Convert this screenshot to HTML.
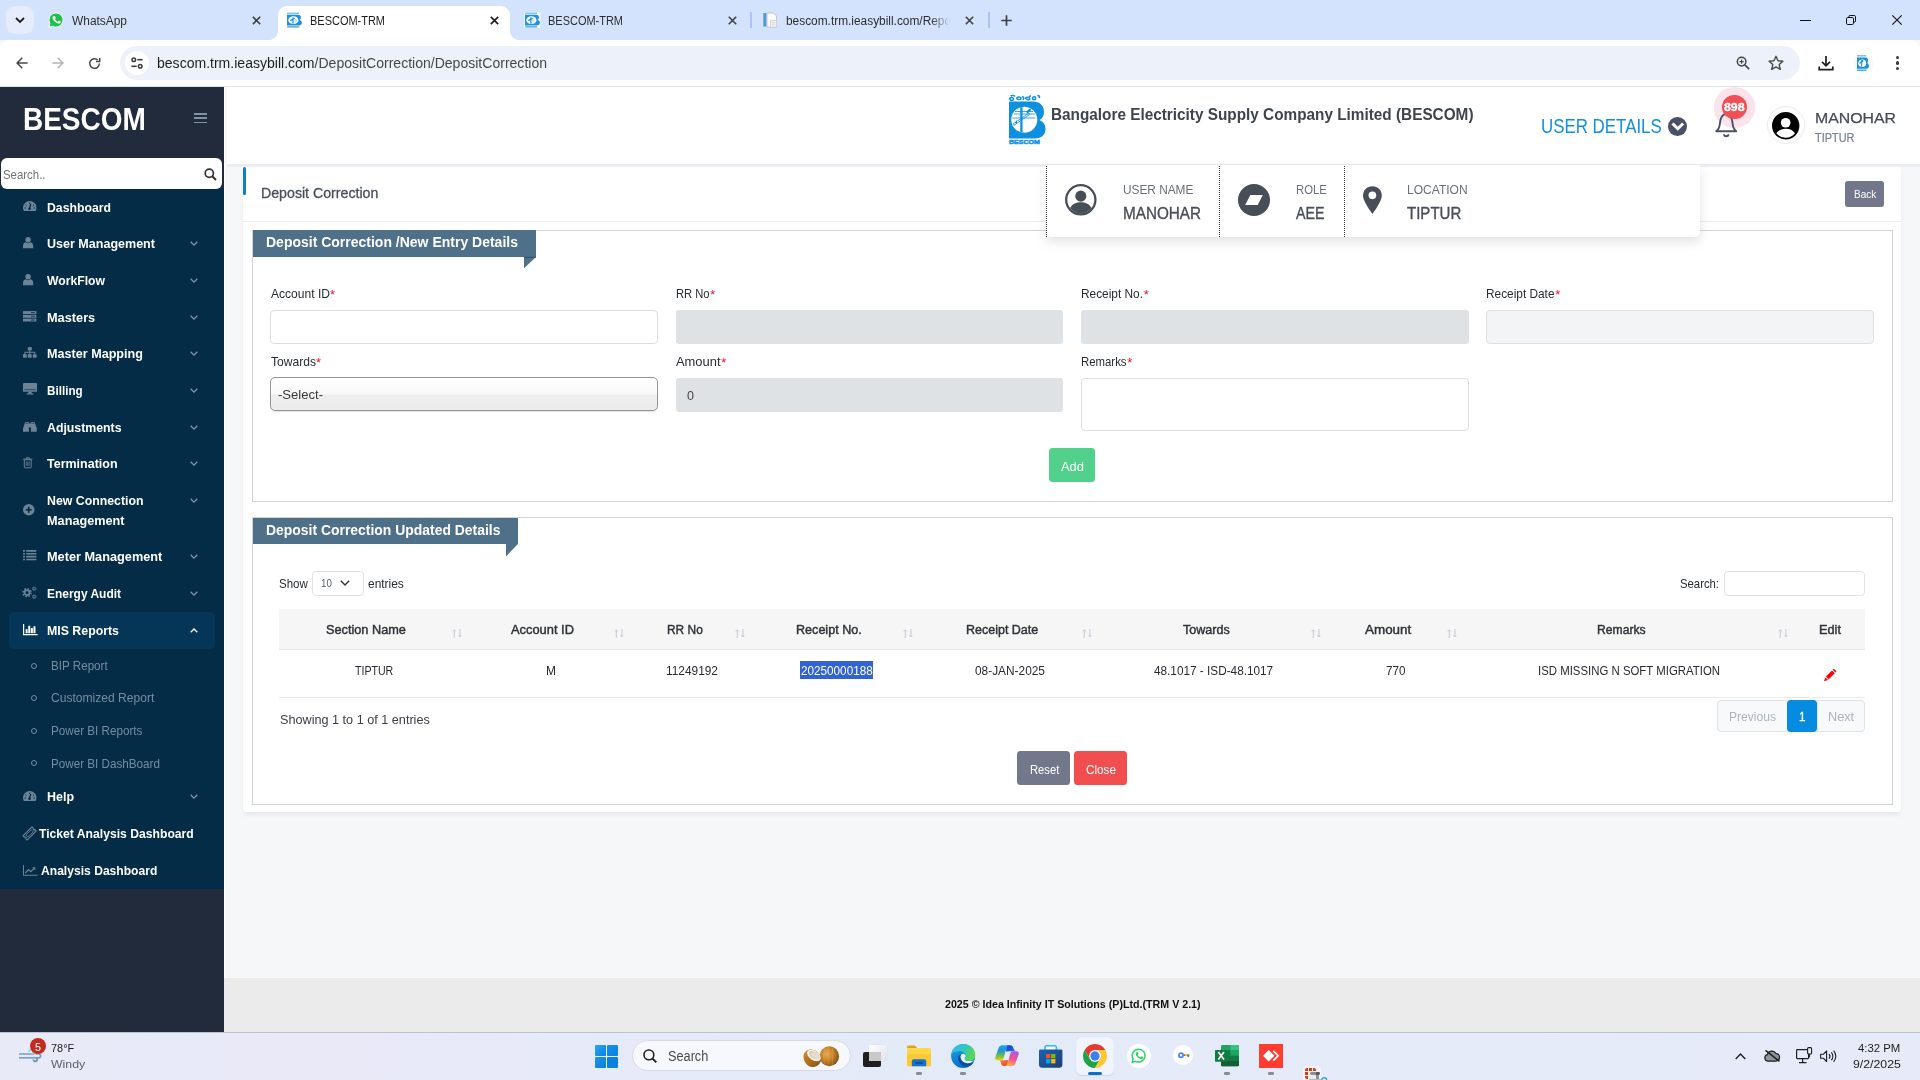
<!DOCTYPE html>
<html>
<head>
<meta charset="utf-8">
<title>BESCOM-TRM</title>
<style>
*{box-sizing:border-box;margin:0;padding:0}
html,body{width:1920px;height:1080px;overflow:hidden;background:#f6f7f9;font-family:"Liberation Sans",sans-serif;}
body{position:relative}
.abs{position:absolute}
.t{position:absolute;white-space:nowrap;transform-origin:0 50%;display:block}
svg{position:absolute;overflow:visible}
</style>
</head>
<body>
<!-- page -->
<div class="abs" style="left:0px;top:87px;width:224px;height:945px;background:#222b3c;"></div>
<div class="abs" style="left:0px;top:188px;width:224px;height:701px;background:#042c46;"></div>
<span class="t" style="left:22.60px;top:101px;height:36px;line-height:36px;font-size:31.5px;color:#fff;font-weight:bold;transform:scaleX(0.8882);">BESCOM</span>
<div class="abs" style="left:194px;top:113px;width:13px;height:1.8px;background:#7d93a6;"></div>
<div class="abs" style="left:194px;top:117.3px;width:13px;height:1.8px;background:#7d93a6;"></div>
<div class="abs" style="left:194px;top:121.6px;width:13px;height:1.8px;background:#7d93a6;"></div>
<div class="abs" style="left:0.8px;top:157.8px;width:221.4px;height:30.9px;background:#fff;border-radius:6px;"></div>
<span class="t" style="left:3.20px;top:167px;height:15px;line-height:15px;font-size:13.3px;color:#737373;transform:scaleX(0.8580);">Search..</span>
<svg style="left:203.5px;top:167.5px;" width="13" height="13" viewBox="0 0 13 13"><circle cx="5.300" cy="5.300" r="4.100" fill="none" stroke="#333" stroke-width="1.700"/><path d="M8.300 8.300L12 12" stroke="#333" stroke-width="2"/></svg>
<div class="abs" style="left:9px;top:612px;width:206px;height:37px;background:#053657;border-radius:4px;"></div>
<span class="t" style="left:46.50px;top:200px;height:15px;line-height:15px;font-size:13.1px;color:#fff;font-weight:bold;transform:scaleX(0.9353);">Dashboard</span>
<span class="t" style="left:46.50px;top:236px;height:15px;line-height:15px;font-size:13.1px;color:#fff;font-weight:bold;transform:scaleX(0.9571);">User Management</span>
<span class="t" style="left:46.50px;top:273px;height:15px;line-height:15px;font-size:13.1px;color:#fff;font-weight:bold;transform:scaleX(0.9303);">WorkFlow</span>
<span class="t" style="left:46.50px;top:310px;height:15px;line-height:15px;font-size:13.1px;color:#fff;font-weight:bold;transform:scaleX(0.9734);">Masters</span>
<span class="t" style="left:46.50px;top:346px;height:15px;line-height:15px;font-size:13.1px;color:#fff;font-weight:bold;transform:scaleX(0.9627);">Master Mapping</span>
<span class="t" style="left:46.50px;top:383px;height:15px;line-height:15px;font-size:13.1px;color:#fff;font-weight:bold;transform:scaleX(0.8920);">Billing</span>
<span class="t" style="left:46.50px;top:420px;height:15px;line-height:15px;font-size:13.1px;color:#fff;font-weight:bold;transform:scaleX(0.9403);">Adjustments</span>
<span class="t" style="left:46.50px;top:456px;height:15px;line-height:15px;font-size:13.1px;color:#fff;font-weight:bold;transform:scaleX(0.9541);">Termination</span>
<span class="t" style="left:46.50px;top:493px;height:15px;line-height:15px;font-size:13.1px;color:#fff;font-weight:bold;transform:scaleX(0.9413);">New Connection</span>
<span class="t" style="left:46.50px;top:513px;height:15px;line-height:15px;font-size:13.1px;color:#fff;font-weight:bold;transform:scaleX(0.9691);">Management</span>
<span class="t" style="left:46.50px;top:549px;height:15px;line-height:15px;font-size:13.1px;color:#fff;font-weight:bold;transform:scaleX(0.9725);">Meter Management</span>
<span class="t" style="left:46.50px;top:586px;height:15px;line-height:15px;font-size:13.1px;color:#fff;font-weight:bold;transform:scaleX(0.9144);">Energy Audit</span>
<span class="t" style="left:46.50px;top:623px;height:15px;line-height:15px;font-size:13.1px;color:#fff;font-weight:bold;transform:scaleX(0.9421);">MIS Reports</span>
<span class="t" style="left:46.50px;top:789px;height:15px;line-height:15px;font-size:13.1px;color:#fff;font-weight:bold;transform:scaleX(0.9511);">Help</span>
<span class="t" style="left:39.40px;top:826px;height:15px;line-height:15px;font-size:13.1px;color:#fff;font-weight:bold;transform:scaleX(0.9285);">Ticket Analysis Dashboard</span>
<span class="t" style="left:40.80px;top:863px;height:15px;line-height:15px;font-size:13.1px;color:#fff;font-weight:bold;transform:scaleX(0.9242);">Analysis Dashboard</span>
<span class="t" style="left:51.10px;top:658px;height:15px;line-height:15px;font-size:13px;color:#758da2;transform:scaleX(0.8950);">BIP Report</span>
<div class="abs" style="left:30.500px;top:662.7px;width:6px;height:6px;border:1.300px solid #758da2;border-radius:50%"></div>
<span class="t" style="left:51.10px;top:690px;height:15px;line-height:15px;font-size:13px;color:#758da2;transform:scaleX(0.9284);">Customized Report</span>
<div class="abs" style="left:30.500px;top:695.3px;width:6px;height:6px;border:1.300px solid #758da2;border-radius:50%"></div>
<span class="t" style="left:51.10px;top:723px;height:15px;line-height:15px;font-size:13px;color:#758da2;transform:scaleX(0.8972);">Power BI Reports</span>
<div class="abs" style="left:30.500px;top:727.7px;width:6px;height:6px;border:1.300px solid #758da2;border-radius:50%"></div>
<span class="t" style="left:51.10px;top:756px;height:15px;line-height:15px;font-size:13px;color:#758da2;transform:scaleX(0.8971);">Power BI DashBoard</span>
<div class="abs" style="left:30.500px;top:760.4px;width:6px;height:6px;border:1.300px solid #758da2;border-radius:50%"></div>
<svg style="left:190.2px;top:241px;" width="8" height="5" viewBox="0 0 8 5"><path d="M.7 .8L4 4.100L7.300 .8" fill="none" stroke="#8096aa" stroke-width="1.300"/></svg>
<svg style="left:190.2px;top:277.8px;" width="8" height="5" viewBox="0 0 8 5"><path d="M.7 .8L4 4.100L7.300 .8" fill="none" stroke="#8096aa" stroke-width="1.300"/></svg>
<svg style="left:190.2px;top:314.5px;" width="8" height="5" viewBox="0 0 8 5"><path d="M.7 .8L4 4.100L7.300 .8" fill="none" stroke="#8096aa" stroke-width="1.300"/></svg>
<svg style="left:190.2px;top:351.2px;" width="8" height="5" viewBox="0 0 8 5"><path d="M.7 .8L4 4.100L7.300 .8" fill="none" stroke="#8096aa" stroke-width="1.300"/></svg>
<svg style="left:190.2px;top:387.9px;" width="8" height="5" viewBox="0 0 8 5"><path d="M.7 .8L4 4.100L7.300 .8" fill="none" stroke="#8096aa" stroke-width="1.300"/></svg>
<svg style="left:190.2px;top:424.6px;" width="8" height="5" viewBox="0 0 8 5"><path d="M.7 .8L4 4.100L7.300 .8" fill="none" stroke="#8096aa" stroke-width="1.300"/></svg>
<svg style="left:190.2px;top:461.2px;" width="8" height="5" viewBox="0 0 8 5"><path d="M.7 .8L4 4.100L7.300 .8" fill="none" stroke="#8096aa" stroke-width="1.300"/></svg>
<svg style="left:190.2px;top:498px;" width="8" height="5" viewBox="0 0 8 5"><path d="M.7 .8L4 4.100L7.300 .8" fill="none" stroke="#8096aa" stroke-width="1.300"/></svg>
<svg style="left:190.2px;top:554px;" width="8" height="5" viewBox="0 0 8 5"><path d="M.7 .8L4 4.100L7.300 .8" fill="none" stroke="#8096aa" stroke-width="1.300"/></svg>
<svg style="left:190.2px;top:591px;" width="8" height="5" viewBox="0 0 8 5"><path d="M.7 .8L4 4.100L7.300 .8" fill="none" stroke="#8096aa" stroke-width="1.300"/></svg>
<svg style="left:190.2px;top:794px;" width="8" height="5" viewBox="0 0 8 5"><path d="M.7 .8L4 4.100L7.300 .8" fill="none" stroke="#8096aa" stroke-width="1.300"/></svg>
<svg style="left:190.2px;top:627.8px;" width="8" height="5" viewBox="0 0 8 5"><path d="M.7 4.300L4 1L7.300 4.300" fill="none" stroke="#fff" stroke-width="1.300"/></svg>
<svg style="left:22.8px;top:201px;" width="13.5" height="10" viewBox="0 0 27 20"><path d="M13.500 0A13.500 13.500 0 0 0 1.800 20h23.400A13.500 13.500 0 0 0 13.500 0z" fill="#6d8398"/><path d="M13.500 3v3M5 7.500l2.200 2M22 7.500l-2.200 2M3 14h3M24 14h-3" stroke="#042c46" stroke-width="2"/><path d="M15.500 6L13 15" stroke="#042c46" stroke-width="2.600"/><circle cx="13" cy="15.500" r="2.600" fill="#042c46"/></svg>
<svg style="left:22.8px;top:236.9px;" width="10.2" height="11.2" viewBox="0 0 20 22"><circle cx="10" cy="5.500" r="5.300" fill="#6d8398"/><path d="M0 22v-5c0-4 3-6.500 6-6.500 1.200 1.200 2.500 1.700 4 1.700s2.800-.500 4-1.700c3 0 6 2.500 6 6.500v5z" fill="#6d8398"/></svg>
<svg style="left:22.8px;top:273.6px;" width="10.2" height="11.2" viewBox="0 0 20 22"><circle cx="10" cy="5.500" r="5.300" fill="#6d8398"/><path d="M0 22v-5c0-4 3-6.500 6-6.500 1.200 1.200 2.500 1.700 4 1.700s2.800-.500 4-1.700c3 0 6 2.500 6 6.500v5z" fill="#6d8398"/></svg>
<svg style="left:22.8px;top:791px;" width="13.5" height="10" viewBox="0 0 27 20"><path d="M13.500 0A13.500 13.500 0 0 0 1.800 20h23.400A13.500 13.500 0 0 0 13.500 0z" fill="#6d8398"/><path d="M13.500 3v3M5 7.500l2.200 2M22 7.500l-2.200 2M3 14h3M24 14h-3" stroke="#042c46" stroke-width="2"/><path d="M15.500 6L13 15" stroke="#042c46" stroke-width="2.600"/><circle cx="13" cy="15.500" r="2.600" fill="#042c46"/></svg>
<svg style="left:22.8px;top:310.8px;" width="13.4" height="10.6" viewBox="0 0 27 21"><rect x="0" y="0" width="27" height="5.800" fill="#6d8398"/><rect x="0" y="7.600" width="27" height="5.800" fill="#6d8398"/><rect x="0" y="15.200" width="27" height="5.800" fill="#6d8398"/><path d="M16 2.900h8M16 10.500h8M16 18.100h8" stroke="#042c46" stroke-width="1.600"/></svg>
<svg style="left:22.8px;top:346.8px;" width="13.6" height="10.8" viewBox="0 0 27 21"><rect x="9.500" y="0" width="8" height="6.500" fill="#6d8398"/><rect x="0" y="14" width="7.500" height="7" fill="#6d8398"/><rect x="9.700" y="14" width="7.500" height="7" fill="#6d8398"/><rect x="19.500" y="14" width="7.500" height="7" fill="#6d8398"/><path d="M13.500 6v8M3.700 14v-3.700h19.600V14" fill="none" stroke="#6d8398" stroke-width="2"/></svg>
<svg style="left:22.8px;top:383px;" width="14" height="11.6" viewBox="0 0 28 23"><rect x="0" y="0" width="28" height="17.500" rx="1.800" fill="#6d8398"/><rect x="2.600" y="2.600" width="22.800" height="9.600" fill="#6d8398"/><path d="M2.600 13.300h22.800" stroke="#042c46" stroke-width="1.300"/><path d="M11 17.500h6l1 3.200h-8z" fill="#6d8398"/><rect x="7.500" y="20.500" width="13" height="2.500" fill="#6d8398"/></svg>
<svg style="left:22.8px;top:421.8px;" width="13.8" height="9.8" viewBox="0 0 28 20"><path d="M4.500 0h7.500v20H0v-7z" fill="#6d8398"/><path d="M23.500 0H16v20h12v-7z" fill="#6d8398"/><rect x="11" y="3" width="6" height="8" fill="#6d8398"/><path d="M5 2.500h6M17 2.500h6" stroke="#042c46" stroke-width="1.300"/></svg>
<svg style="left:23.3px;top:457px;" width="9.5" height="11.3" viewBox="0 0 19 23"><path d="M2.500 5.500h14v15a1.500 1.500 0 0 1-1.500 1.500h-11a1.500 1.500 0 0 1-1.500-1.500z" fill="none" stroke="#6d8398" stroke-width="2"/><path d="M0 4.500h19M6.500 4V1.500h6V4" fill="none" stroke="#6d8398" stroke-width="2"/><path d="M6.500 9v9.500M9.500 9v9.500M12.500 9v9.500" stroke="#6d8398" stroke-width="1.500"/></svg>
<svg style="left:22.8px;top:503.8px;" width="11.5" height="11.5" viewBox="0 0 23 23"><circle cx="11.500" cy="11.500" r="11.500" fill="#6d8398"/><path d="M11.500 5.500v12M5.500 11.500h12" stroke="#042c46" stroke-width="3.400"/></svg>
<svg style="left:22.8px;top:549.7px;" width="13.4" height="10.4" viewBox="0 0 27 21"><path d="M0 1.700h4M0 7.500h4M0 13.300h4M0 19.100h4" stroke="#6d8398" stroke-width="3.300"/><path d="M6.500 1.700H27M6.500 7.500H27M6.500 13.300H27M6.500 19.100H27" stroke="#6d8398" stroke-width="3.300"/></svg>
<svg style="left:22.3px;top:585.8px;" width="15" height="13.4" viewBox="0 0 30 27"><circle cx="10" cy="13.500" r="8" fill="none" stroke="#6d8398" stroke-width="3.400" stroke-dasharray="3.140 3.140"/><circle cx="10" cy="13.500" r="5" fill="none" stroke="#6d8398" stroke-width="3.600"/><circle cx="24.500" cy="5.500" r="3.900" fill="none" stroke="#6d8398" stroke-width="1.800" stroke-dasharray="1.530 1.530"/><circle cx="24.500" cy="5.500" r="2.300" fill="none" stroke="#6d8398" stroke-width="1.900"/><circle cx="24.500" cy="21.500" r="3.900" fill="none" stroke="#6d8398" stroke-width="1.800" stroke-dasharray="1.530 1.530"/><circle cx="24.500" cy="21.500" r="2.300" fill="none" stroke="#6d8398" stroke-width="1.900"/></svg>
<svg style="left:22.8px;top:624.2px;" width="14.6" height="11.2" viewBox="0 0 29 22"><path d="M1.200 0V20.800H29" fill="none" stroke="#fff" stroke-width="2.400"/><path d="M7.200 18.500V10.500M12.400 18.500V3.500M17.600 18.500V8M22.800 18.500V4.500" stroke="#fff" stroke-width="4"/></svg>
<svg style="left:22.5px;top:826.8px;" width="13.2" height="12.8" viewBox="0 0 26 26"><g transform="rotate(-45 13 13)"><path d="M0 7h26v4a2 2 0 0 0 0 4v4H0v-4a2 2 0 0 0 0-4z" fill="none" stroke="#6d8398" stroke-width="2.200"/><rect x="5.500" y="10" width="15" height="6" fill="none" stroke="#6d8398" stroke-width="1.600"/></g></svg>
<svg style="left:22.8px;top:865.2px;" width="14.6" height="10.8" viewBox="0 0 29 21"><path d="M1 0V20H29" fill="none" stroke="#6d8398" stroke-width="2"/><path d="M4.500 15.500L11 9l4.500 4L23 5.500" fill="none" stroke="#6d8398" stroke-width="2.600"/><path d="M18.500 4h6v6z" fill="#6d8398"/></svg>
<div class="abs" style="left:224px;top:87px;width:1.3px;height:945px;background:#fff;"></div>
<div class="abs" style="left:227px;top:163.7px;width:1693px;height:3.4px;background:linear-gradient(#e8eaf0,#eef0f5);"></div>
<div class="abs" style="left:227px;top:87px;width:1693px;height:76.8px;background:#fff;"></div>
<svg style="left:1009px;top:94.5px;" width="36.5" height="49.5" viewBox="0 0 73 99"><path d="M0 13H48c13 0 22 8 22 21 0 8-4 13-9 16 7 3 12 9 12 18 0 13-10 19-22 19H0z" fill="#0d90e0"/><circle cx="30.500" cy="49.500" r="26" fill="#fff"/><path d="M22.500 24.500h4.600v50h-4.600z" fill="#0d90e0"/><path d="M8 58l32-22 1.800 2.600-32 22zM10 38h42M7 46h46M12 33h36" stroke="#0d90e0" stroke-width="1.600" fill="none"/><path d="M34 33l8-6 3 3-8 7zM16 50l-5 6 5 1z" fill="#0d90e0"/><g fill="none" stroke="#0d90e0" stroke-width="2.900" transform="scale(1.090 1)"><path d="M1 9c0-5 7-5 7-1s-6 4-6 0M3 2c3-2 7-1 8 1"/><path d="M14 8c0-5 8-5 8-1 0 3-7 3-7 0M24 3c3 0 4 5 1 6"/><path d="M30 8c0-5 8-5 8 0 0 2-6 2-6-1M40 1l-3 3"/><circle cx="46" cy="6.500" r="3"/><path d="M52 1c4 0 5 3 3 5"/></g><text x="0" y="98.600" font-family="Liberation Sans" font-weight="bold" font-size="12.500" textLength="62" lengthAdjust="spacingAndGlyphs" fill="#0d90e0" stroke="#0d90e0" stroke-width=".9">BESCOM</text></svg>
<span class="t" style="left:1051.30px;top:106px;height:17px;line-height:17px;font-size:16px;color:#3e444e;font-weight:bold;transform:scaleX(0.9581);">Bangalore Electricity Supply Company Limited (BESCOM)</span>
<span class="t" style="left:1541.20px;top:115px;height:22px;line-height:22px;font-size:19.6px;color:#1290e0;transform:scaleX(0.8620);">USER DETAILS</span>
<div class="abs" style="left:1668px;top:116.8px;width:18.8px;height:18.8px;background:#4a5068;border-radius:50%;"></div>
<svg style="left:1670.6px;top:122.3px;" width="13.6" height="8.6" viewBox="0 0 13.600 8.600"><path d="M1.500 1.500L6.800 6.700L12.100 1.500" fill="none" stroke="#fff" stroke-width="3"/></svg>
<div class="abs" style="left:1713.7px;top:87.2px;width:41.7px;height:40.5px;background:#fbe3ec;border-radius:50%;"></div>
<svg style="left:1715px;top:112.2px;" width="22.5" height="25.4" viewBox="0 0 22.500 25.400"><path d="M1.200 19.200c2.200-1.400 3.300-3.400 3.700-7.500.5-5.700 2.300-9.700 6.350-9.700s5.850 4 6.350 9.700c.4 4.100 1.500 6.100 3.700 7.500z" fill="none" stroke="#4a5068" stroke-width="1.900" stroke-linejoin="round"/><path d="M8.700 22.300c.5 1.300 1.400 1.900 2.550 1.900s2.050-.6 2.550-1.900" fill="none" stroke="#4a5068" stroke-width="1.900"/></svg>
<div class="abs" style="left:1722px;top:94.6px;width:24.6px;height:24.6px;background:#f04f56;border-radius:50%;"></div>
<span class="t" style="left:1724.10px;top:100px;height:14px;line-height:14px;font-size:11.8px;color:#fff;font-weight:bold;transform:scaleX(1.0463);-webkit-text-stroke:0.35px #fff;">898</span>
<div class="abs" style="left:1766.5px;top:106px;width:38px;height:38px;background:#fff;border-radius:50%;border:1px solid #ececec;"></div>
<svg style="left:1772px;top:111.7px;" width="27.4" height="27.4" viewBox="0 0 28 28"><circle cx="14" cy="14" r="14" fill="#000"/><circle cx="14" cy="11" r="4.900" fill="#fff"/><path d="M4.500 21.800c2-3.400 5.500-4.800 9.500-4.800s7.500 1.400 9.500 4.800A12.300 12.300 0 0 1 14 26.300a12.300 12.300 0 0 1-9.500-4.500z" fill="#fff"/></svg>
<span class="t" style="left:1815.00px;top:109px;height:17px;line-height:17px;font-size:15.5px;color:#464b56;transform:scaleX(1.0224);-webkit-text-stroke:0.25px #464b56;">MANOHAR</span>
<span class="t" style="left:1815.00px;top:131px;height:14px;line-height:14px;font-size:12px;color:#7a8097;transform:scaleX(0.9093);-webkit-text-stroke:0.2px #7a8097;">TIPTUR</span>
<div class="abs" style="left:243px;top:167px;width:1658.3px;height:644.8px;background:#fff;box-shadow:0 3px 4px -1px rgba(185,190,202,.36);border-radius:4px;"></div>
<div class="abs" style="left:242.8px;top:166.7px;width:3.2px;height:28px;background:#0f7fc4;border-radius:1.600px;"></div>
<span class="t" style="left:260.80px;top:185px;height:16px;line-height:16px;font-size:14.8px;color:#494e59;transform:scaleX(0.9579);-webkit-text-stroke:0.3px #494e59;">Deposit Correction</span>
<div class="abs" style="left:243px;top:221px;width:1658.3px;height:1px;background:#ebebee;"></div>
<div class="abs" style="left:1845.2px;top:181px;width:38.7px;height:25.8px;background:#73778c;border-radius:3px;"></div>
<span class="t" style="left:1853.90px;top:188px;height:12px;line-height:12px;font-size:11px;color:#fff;transform:scaleX(0.9078);">Back</span>
<div class="abs" style="left:252px;top:229.500px;width:1641px;height:272px;border:1px solid #d4d4d6;background:#fff"></div>
<div class="abs" style="left:252.5px;top:230px;width:283.4px;height:26.7px;background:#4f7089;"></div>
<svg style="left:524px;top:256.5px;" width="12" height="11.2" viewBox="0 0 12 11.200"><path d="M0 0H12L0 11.200z" fill="#4f7089"/><path d="M0 .3H12" stroke="#264f6e" stroke-width=".9"/></svg>
<span class="t" style="left:266.30px;top:233px;height:17px;line-height:17px;font-size:15.3px;color:#fff;font-weight:bold;transform:scaleX(0.9148);">Deposit Correction /New Entry Details</span>
<span class="t" style="left:270.50px;top:286px;height:15px;line-height:15px;font-size:13px;color:#282c31;transform:scaleX(0.9279);">Account ID</span>
<span class="t" style="left:330.00px;top:287px;height:15px;line-height:15px;font-size:13px;color:#f0142f;">*</span>
<span class="t" style="left:676.30px;top:286px;height:15px;line-height:15px;font-size:13px;color:#282c31;transform:scaleX(0.8588);">RR No</span>
<span class="t" style="left:710.30px;top:287px;height:15px;line-height:15px;font-size:13px;color:#f0142f;">*</span>
<span class="t" style="left:1081.30px;top:286px;height:15px;line-height:15px;font-size:13px;color:#282c31;transform:scaleX(0.9128);">Receipt No.</span>
<span class="t" style="left:1143.80px;top:287px;height:15px;line-height:15px;font-size:13px;color:#f0142f;">*</span>
<span class="t" style="left:1486.30px;top:286px;height:15px;line-height:15px;font-size:13px;color:#282c31;transform:scaleX(0.9115);">Receipt Date</span>
<span class="t" style="left:1555.30px;top:287px;height:15px;line-height:15px;font-size:13px;color:#f0142f;">*</span>
<span class="t" style="left:270.50px;top:354px;height:15px;line-height:15px;font-size:13px;color:#282c31;transform:scaleX(0.9296);">Towards</span>
<span class="t" style="left:316.00px;top:355px;height:15px;line-height:15px;font-size:13px;color:#f0142f;">*</span>
<span class="t" style="left:676.30px;top:354px;height:15px;line-height:15px;font-size:13px;color:#282c31;transform:scaleX(0.9932);">Amount</span>
<span class="t" style="left:721.30px;top:355px;height:15px;line-height:15px;font-size:13px;color:#f0142f;">*</span>
<span class="t" style="left:1081.30px;top:354px;height:15px;line-height:15px;font-size:13px;color:#282c31;transform:scaleX(0.8749);">Remarks</span>
<span class="t" style="left:1127.30px;top:355px;height:15px;line-height:15px;font-size:13px;color:#f0142f;">*</span>
<div class="abs" style="left:270px;top:310px;width:388px;height:33.500px;border:1px solid #dcdee3;border-radius:4px;background:#fff"></div>
<div class="abs" style="left:676px;top:310px;width:387px;height:33.5px;background:#dfe2e5;border-radius:3px;"></div>
<div class="abs" style="left:1081px;top:310px;width:388px;height:33.5px;background:#dfe2e5;border-radius:3px;"></div>
<div class="abs" style="left:1486px;top:310px;width:388px;height:33.500px;border:1px solid #dfe1e5;border-radius:4px;background:#f3f4f6"></div>
<div class="abs" style="left:270px;top:377px;width:388px;height:34.200px;border:1px solid #949494;border-radius:5px;background:linear-gradient(#fff 0%,#f9f9f9 48%,#eeeeee 54%,#ececec 100%);box-shadow:0 1px 1px rgba(0,0,0,.10)"></div>
<span class="t" style="left:278.30px;top:387px;height:15px;line-height:15px;font-size:13.5px;color:#3a3a3a;transform:scaleX(0.9675);">-Select-</span>
<div class="abs" style="left:676px;top:377.5px;width:387px;height:34px;background:#dfe2e5;border-radius:3px;"></div>
<span class="t" style="left:686.50px;top:388px;height:15px;line-height:15px;font-size:13px;color:#444;transform:scaleX(0.9682);">0</span>
<div class="abs" style="left:1081px;top:377.500px;width:388px;height:53.500px;border:1px solid #dcdee3;border-radius:4px;background:#fff"></div>
<div class="abs" style="left:1049px;top:448px;width:46px;height:33.8px;background:#52d18c;border-radius:3.500px;"></div>
<span class="t" style="left:1060.90px;top:459px;height:15px;line-height:15px;font-size:13px;color:#fff;transform:scaleX(0.9943);">Add</span>
<div class="abs" style="left:252px;top:516.500px;width:1641px;height:288px;border:1px solid #d4d4d6;background:#fff"></div>
<div class="abs" style="left:252.5px;top:517.7px;width:265.4px;height:26px;background:#4f7089;"></div>
<svg style="left:506.1px;top:543.5px;" width="11.9" height="12.4" viewBox="0 0 11.900 12.400"><path d="M0 0H11.900L0 12.400z" fill="#4f7089"/></svg>
<span class="t" style="left:266.30px;top:521px;height:17px;line-height:17px;font-size:15.3px;color:#fff;font-weight:bold;transform:scaleX(0.9103);">Deposit Correction Updated Details</span>
<span class="t" style="left:279.00px;top:576px;height:15px;line-height:15px;font-size:13px;color:#282c31;transform:scaleX(0.8856);">Show</span>
<div class="abs" style="left:312.200px;top:571px;width:51.600px;height:24.800px;border:1px solid #e0e3e8;border-radius:4px;background:#fff"></div>
<span class="t" style="left:321.30px;top:577px;height:12px;line-height:12px;font-size:11.5px;color:#5a6068;transform:scaleX(0.8443);">10</span>
<svg style="left:340.3px;top:580.2px;" width="10" height="6" viewBox="0 0 10 6"><path d="M.8 .8L5 5L9.200 .8" fill="none" stroke="#333" stroke-width="1.400"/></svg>
<span class="t" style="left:367.50px;top:576px;height:15px;line-height:15px;font-size:13px;color:#282c31;transform:scaleX(0.9175);">entries</span>
<span class="t" style="left:1679.80px;top:576px;height:15px;line-height:15px;font-size:13px;color:#282c31;transform:scaleX(0.8705);">Search:</span>
<div class="abs" style="left:1724px;top:571px;width:141px;height:24.800px;border:1px solid #e0e3e8;border-radius:4px;background:#fff"></div>
<div class="abs" style="left:278.8px;top:609px;width:1586.2px;height:40.3px;background:#f6f6f6;"></div>
<div class="abs" style="left:278.8px;top:649.2px;width:1586.2px;height:1px;background:#e9eaed;"></div>
<span class="t" style="left:326.30px;top:622px;height:15px;line-height:15px;font-size:13.2px;color:#2f3338;transform:scaleX(0.9649);-webkit-text-stroke:0.45px #2f3338;">Section Name</span>
<span class="t" style="left:511.30px;top:622px;height:15px;line-height:15px;font-size:13.2px;color:#2f3338;transform:scaleX(0.9758);-webkit-text-stroke:0.45px #2f3338;">Account ID</span>
<span class="t" style="left:666.80px;top:622px;height:15px;line-height:15px;font-size:13.2px;color:#2f3338;transform:scaleX(0.9039);-webkit-text-stroke:0.45px #2f3338;">RR No</span>
<span class="t" style="left:796.30px;top:622px;height:15px;line-height:15px;font-size:13.2px;color:#2f3338;transform:scaleX(0.9541);-webkit-text-stroke:0.45px #2f3338;">Receipt No.</span>
<span class="t" style="left:965.80px;top:622px;height:15px;line-height:15px;font-size:13.2px;color:#2f3338;transform:scaleX(0.9475);-webkit-text-stroke:0.45px #2f3338;">Receipt Date</span>
<span class="t" style="left:1182.50px;top:622px;height:15px;line-height:15px;font-size:13.2px;color:#2f3338;transform:scaleX(0.9521);-webkit-text-stroke:0.45px #2f3338;">Towards</span>
<span class="t" style="left:1365.00px;top:622px;height:15px;line-height:15px;font-size:13.2px;color:#2f3338;transform:scaleX(1.0177);-webkit-text-stroke:0.45px #2f3338;">Amount</span>
<span class="t" style="left:1597.40px;top:622px;height:15px;line-height:15px;font-size:13.2px;color:#2f3338;transform:scaleX(0.9222);-webkit-text-stroke:0.45px #2f3338;">Remarks</span>
<span class="t" style="left:1819.40px;top:622px;height:15px;line-height:15px;font-size:13.2px;color:#2f3338;transform:scaleX(0.9672);-webkit-text-stroke:0.45px #2f3338;">Edit</span>
<svg style="left:451.8px;top:628.8px;" width="10.4" height="8.8" viewBox="0 0 10.400 8.800"><path d="M2.300 8.800V.8M.9 2.400L2.300 .8 3.700 2.400" fill="none" stroke="#c6cad6" stroke-width="1"/><path d="M7.900 0V8M6.500 6.400L7.900 8 9.300 6.400" fill="none" stroke="#c6cad6" stroke-width="1"/></svg>
<svg style="left:614.3px;top:628.8px;" width="10.4" height="8.8" viewBox="0 0 10.400 8.800"><path d="M2.300 8.800V.8M.9 2.400L2.300 .8 3.700 2.400" fill="none" stroke="#c6cad6" stroke-width="1"/><path d="M7.900 0V8M6.500 6.400L7.900 8 9.300 6.400" fill="none" stroke="#c6cad6" stroke-width="1"/></svg>
<svg style="left:735px;top:628.8px;" width="10.4" height="8.8" viewBox="0 0 10.400 8.800"><path d="M2.300 8.800V.8M.9 2.400L2.300 .8 3.700 2.400" fill="none" stroke="#c6cad6" stroke-width="1"/><path d="M7.900 0V8M6.500 6.400L7.900 8 9.300 6.400" fill="none" stroke="#c6cad6" stroke-width="1"/></svg>
<svg style="left:903px;top:628.8px;" width="10.4" height="8.8" viewBox="0 0 10.400 8.800"><path d="M2.300 8.800V.8M.9 2.400L2.300 .8 3.700 2.400" fill="none" stroke="#c6cad6" stroke-width="1"/><path d="M7.900 0V8M6.500 6.400L7.900 8 9.300 6.400" fill="none" stroke="#c6cad6" stroke-width="1"/></svg>
<svg style="left:1081.8px;top:628.8px;" width="10.4" height="8.8" viewBox="0 0 10.400 8.800"><path d="M2.300 8.800V.8M.9 2.400L2.300 .8 3.700 2.400" fill="none" stroke="#c6cad6" stroke-width="1"/><path d="M7.900 0V8M6.500 6.400L7.900 8 9.300 6.400" fill="none" stroke="#c6cad6" stroke-width="1"/></svg>
<svg style="left:1310.8px;top:628.8px;" width="10.4" height="8.8" viewBox="0 0 10.400 8.800"><path d="M2.300 8.800V.8M.9 2.400L2.300 .8 3.700 2.400" fill="none" stroke="#c6cad6" stroke-width="1"/><path d="M7.900 0V8M6.500 6.400L7.900 8 9.300 6.400" fill="none" stroke="#c6cad6" stroke-width="1"/></svg>
<svg style="left:1446.8px;top:628.8px;" width="10.4" height="8.8" viewBox="0 0 10.400 8.800"><path d="M2.300 8.800V.8M.9 2.400L2.300 .8 3.700 2.400" fill="none" stroke="#c6cad6" stroke-width="1"/><path d="M7.900 0V8M6.500 6.400L7.900 8 9.300 6.400" fill="none" stroke="#c6cad6" stroke-width="1"/></svg>
<svg style="left:1777.6px;top:628.8px;" width="10.4" height="8.8" viewBox="0 0 10.400 8.800"><path d="M2.300 8.800V.8M.9 2.400L2.300 .8 3.700 2.400" fill="none" stroke="#c6cad6" stroke-width="1"/><path d="M7.900 0V8M6.500 6.400L7.900 8 9.300 6.400" fill="none" stroke="#c6cad6" stroke-width="1"/></svg>
<div class="abs" style="left:800px;top:661px;width:73px;height:17.8px;background:#3163d6;"></div>
<span class="t" style="left:355.00px;top:664px;height:14px;line-height:14px;font-size:12.2px;color:#282c31;transform:scaleX(0.8694);">TIPTUR</span>
<span class="t" style="left:545.50px;top:664px;height:14px;line-height:14px;font-size:12.2px;color:#282c31;transform:scaleX(0.9839);">M</span>
<span class="t" style="left:666.30px;top:664px;height:14px;line-height:14px;font-size:12.2px;color:#282c31;transform:scaleX(0.9742);">11249192</span>
<span class="t" style="left:800.60px;top:664px;height:14px;line-height:14px;font-size:12.2px;color:#fff;transform:scaleX(0.9620);">20250000188</span>
<span class="t" style="left:974.50px;top:664px;height:14px;line-height:14px;font-size:12.2px;color:#282c31;transform:scaleX(0.9738);">08-JAN-2025</span>
<span class="t" style="left:1153.80px;top:664px;height:14px;line-height:14px;font-size:12.2px;color:#282c31;transform:scaleX(0.9664);">48.1017 - ISD-48.1017</span>
<span class="t" style="left:1386.30px;top:664px;height:14px;line-height:14px;font-size:12.2px;color:#282c31;transform:scaleX(0.9580);">770</span>
<span class="t" style="left:1538.30px;top:664px;height:14px;line-height:14px;font-size:12.2px;color:#282c31;transform:scaleX(0.9355);">ISD MISSING N SOFT MIGRATION</span>
<svg style="left:1824.3px;top:668.6px;" width="12.2" height="12.2" viewBox="0 0 12.200 12.200"><path d="M0 12.200L1.300 8.200L4 10.900z" fill="#f00"/><path d="M1.900 7.500L8 1.400L10.800 4.200L4.700 10.300z" fill="#f00"/><path d="M8.700 .8L9.400 .1a.6.6 0 0 1 .8 0L12.100 2a.6.6 0 0 1 0 .8L11.400 3.500z" fill="#f00"/></svg>
<div class="abs" style="left:278.8px;top:697px;width:1586.2px;height:1px;background:#e9eaed;"></div>
<span class="t" style="left:279.50px;top:712px;height:15px;line-height:15px;font-size:13.5px;color:#3b4047;transform:scaleX(0.9371);">Showing 1 to 1 of 1 entries</span>
<div class="abs" style="left:1717px;top:700px;width:148px;height:32px;border:1px solid #dfe2e6;border-radius:4px;background:#f8f9fa"></div>
<div class="abs" style="left:1816.8px;top:700.5px;width:1px;height:31px;background:#dfe2e6;"></div>
<div class="abs" style="left:1787px;top:699.8px;width:30.2px;height:32.4px;background:#058bdf;border-radius:4px;"></div>
<span class="t" style="left:1729.30px;top:709px;height:15px;line-height:15px;font-size:13px;color:#adb3bd;transform:scaleX(0.9292);">Previous</span>
<span class="t" style="left:1798.80px;top:709px;height:15px;line-height:15px;font-size:13px;color:#fff;transform:scaleX(0.8990);-webkit-text-stroke:0.3px #fff;">1</span>
<span class="t" style="left:1827.70px;top:709px;height:15px;line-height:15px;font-size:13px;color:#adb3bd;transform:scaleX(0.9727);">Next</span>
<div class="abs" style="left:1017px;top:751px;width:53px;height:34px;background:#73778c;border-radius:3.500px;"></div>
<span class="t" style="left:1029.50px;top:762px;height:15px;line-height:15px;font-size:13px;color:#fff;transform:scaleX(0.8628);">Reset</span>
<div class="abs" style="left:1074px;top:751px;width:53px;height:34px;background:#f14e4f;border-radius:3.500px;"></div>
<span class="t" style="left:1085.50px;top:762px;height:15px;line-height:15px;font-size:13px;color:#fff;transform:scaleX(0.9026);">Close</span>
<div class="abs" style="left:1046px;top:165px;width:653.5px;height:72px;background:#fff;box-shadow:0 5px 11px rgba(110,114,128,.2);border-radius:0 0 5px 5px;"></div>
<div class="abs" style="left:1046.4px;top:165.500px;width:0;height:71.500px;border-left:1.200px dotted #333"></div>
<div class="abs" style="left:1219px;top:165.500px;width:0;height:71.500px;border-left:1.200px dotted #333"></div>
<div class="abs" style="left:1344.2px;top:165.500px;width:0;height:71.500px;border-left:1.200px dotted #333"></div>
<svg style="left:1065px;top:183.8px;" width="31.6" height="31.6" viewBox="0 0 32 32"><circle cx="16" cy="16" r="14.800" fill="#fff" stroke="#484e58" stroke-width="2.300"/><circle cx="16" cy="12.300" r="5.600" fill="#484e58"/><path d="M5.200 24.200c2.300-4 6.300-5.600 10.800-5.600s8.500 1.600 10.800 5.600A13.800 13.800 0 0 1 16 29.800a13.800 13.800 0 0 1-10.800-5.600z" fill="#484e58"/></svg>
<span class="t" style="left:1123.30px;top:183px;height:14px;line-height:14px;font-size:12.7px;color:#6a7078;transform:scaleX(0.9323);">USER NAME</span>
<span class="t" style="left:1123.30px;top:205px;height:17px;line-height:17px;font-size:15.6px;color:#484e58;transform:scaleX(0.9782);-webkit-text-stroke:0.35px #484e58;">MANOHAR</span>
<svg style="left:1238px;top:183.6px;" width="32" height="32" viewBox="0 0 32 32"><circle cx="16" cy="16" r="16" fill="#484e58"/><path d="M12.300 11h12.500l-5.100 10H7.200z" fill="#fff"/></svg>
<span class="t" style="left:1295.80px;top:183px;height:14px;line-height:14px;font-size:12.7px;color:#6a7078;transform:scaleX(0.8906);">ROLE</span>
<span class="t" style="left:1295.80px;top:205px;height:17px;line-height:17px;font-size:15.6px;color:#484e58;transform:scaleX(0.9098);-webkit-text-stroke:0.35px #484e58;">AEE</span>
<svg style="left:1362.6px;top:185.5px;" width="18.8" height="28" viewBox="0 0 19 28"><path d="M9.500 0C4 0 0 4.100 0 9.500 0 16 9.500 28 9.500 28S19 16 19 9.500C19 4.100 15 0 9.500 0z" fill="#484e58"/><circle cx="9.500" cy="9.300" r="3.900" fill="#fff"/></svg>
<span class="t" style="left:1407.40px;top:183px;height:14px;line-height:14px;font-size:12.7px;color:#6a7078;transform:scaleX(0.9488);">LOCATION</span>
<span class="t" style="left:1407.40px;top:205px;height:17px;line-height:17px;font-size:15.6px;color:#484e58;transform:scaleX(0.9640);-webkit-text-stroke:0.35px #484e58;">TIPTUR</span>
<!-- footer + taskbar -->
<div class="abs" style="left:224px;top:977.5px;width:1696px;height:54.5px;background:#ebebeb;"></div>
<span class="t" style="left:944.50px;top:998px;height:12px;line-height:12px;font-size:11.5px;color:#111;font-weight:bold;transform:scaleX(0.9276);">2025 © Idea Infinity IT Solutions (P)Ltd.(TRM V 2.1)</span>
<div class="abs" style="left:0px;top:1032px;width:1920px;height:48px;background:linear-gradient(90deg,#e8eaf8 0%,#e9e9f8 18%,#e4ebf8 45%,#e5ebf8 75%,#e7eaf9 100%);"></div>
<div class="abs" style="left:0px;top:1031.7px;width:1920px;height:1px;background:#bcc2ce;"></div>
<svg style="left:19px;top:1048px;" width="23" height="15" viewBox="0 0 23 15"><path d="M0 6H15.500" stroke="#86a7cb" stroke-width="1.700"/><path d="M0 9.800H19" stroke="#7c9fc6" stroke-width="1.700"/><path d="M10 3.800c.3-2.600 4.300-2.800 4.500-.2.100 1.500-1 2.300-2.300 2.400" fill="none" stroke="#a9c2dc" stroke-width="1.700"/><path d="M16.500 6.200c2.300-1.400 5.300-.3 5.200 1.800-.1 1.500-1.300 2-2.900 1.900" fill="none" stroke="#7fa2c6" stroke-width="1.900"/><path d="M17 9.800c1.500.6 1.700 2.700.300 3.300-1.300.6-2.900-.1-2.900-1.500" fill="none" stroke="#6b94ba" stroke-width="1.900"/></svg>
<div class="abs" style="left:29.5px;top:1038px;width:16px;height:16px;background:#c42b1c;border-radius:50%;"></div>
<span class="t" style="left:34.60px;top:1041px;height:12px;line-height:12px;font-size:11px;color:#fff;transform:scaleX(0.9807);">5</span>
<span class="t" style="left:50.80px;top:1042px;height:12px;line-height:12px;font-size:10.8px;color:#1b1b1b;transform:scaleX(1.0118);">78°F</span>
<span class="t" style="left:50.80px;top:1058px;height:12px;line-height:12px;font-size:10.8px;color:#5f6368;transform:scaleX(1.1398);">Windy</span>
<div class="abs" style="left:595px;top:1045.1px;width:11px;height:10.8px;background:linear-gradient(135deg,#29a8f3,#0b7fdc);border-radius:1px;"></div>
<div class="abs" style="left:607.1px;top:1045.1px;width:11px;height:10.8px;background:linear-gradient(135deg,#1593ec,#0b7fdc);border-radius:1px;"></div>
<div class="abs" style="left:595px;top:1056.9px;width:11px;height:10.8px;background:linear-gradient(135deg,#1b96ee,#0b7fdc);border-radius:1px;"></div>
<div class="abs" style="left:607.1px;top:1056.9px;width:11px;height:10.8px;background:linear-gradient(135deg,#0a80e0,#0b7fdc);border-radius:1px;"></div>
<div class="abs" style="left:631.500px;top:1040.400px;width:219px;height:31px;border:1px solid #d6dbe8;border-radius:15.500px;background:#f7f8fd"></div>
<svg style="left:643px;top:1049.3px;" width="14" height="14" viewBox="0 0 14 14"><circle cx="5.900" cy="5.900" r="4.900" fill="none" stroke="#222" stroke-width="1.600"/><path d="M9.500 9.500L13.300 13.300" stroke="#222" stroke-width="1.900"/></svg>
<span class="t" style="left:668.40px;top:1048px;height:16px;line-height:16px;font-size:14px;color:#4a4a4a;transform:scaleX(0.9085);">Search</span>
<svg style="left:803px;top:1045.6px;" width="36.2" height="21.4" viewBox="0 0 36.200 21.400"><defs><radialGradient id="cw" cx=".38" cy=".38" r=".75"><stop offset="0" stop-color="#e6a852"/><stop offset=".45" stop-color="#c4832a"/><stop offset=".8" stop-color="#8f5a18"/><stop offset="1" stop-color="#5e3a10"/></radialGradient><linearGradient id="ch" x1="0" y1="0" x2="1" y2="1"><stop offset="0" stop-color="#cf9036"/><stop offset=".6" stop-color="#a8691a"/><stop offset="1" stop-color="#7d4a0e"/></linearGradient></defs><ellipse cx="26.300" cy="10.300" rx="9.800" ry="10" fill="url(#cw)"/><path d="M22 2c-1.500 5-1.500 11 0 16.500M25.500 .8c-.8 6-.8 13 .3 19M29.500 1.500c.6 5 .6 12-.4 17.500" stroke="#f0bd6c" stroke-width=".5" opacity=".55" fill="none"/><path d="M.5 9.500C1 6 4 3.400 8 3.400c5 0 10 4.600 10.300 10.600C17 18.500 13.500 21 9.500 21 4.500 21 0 15.500 .5 9.500z" fill="url(#ch)"/><ellipse cx="10.900" cy="9.500" rx="7.600" ry="4.700" transform="rotate(33 10.900 9.500)" fill="#fbf3e6"/><ellipse cx="11.300" cy="9.200" rx="5.900" ry="3.300" transform="rotate(33 11.300 9.200)" fill="#d5cbbd"/><ellipse cx="12.300" cy="9.800" rx="4.500" ry="2.500" transform="rotate(33 12.300 9.800)" fill="#e6ddd0"/></svg>
<div class="abs" style="left:868.5px;top:1045px;width:18.3px;height:15.5px;background:linear-gradient(135deg,#fff,#dfe2e8);border-radius:2px;box-shadow:0 0 1px rgba(0,0,0,.2);"></div>
<div class="abs" style="left:863px;top:1052px;width:18px;height:15px;background:#1f1f1f;border-radius:2px;"></div>
<div class="abs" style="left:868.5px;top:1052px;width:12.5px;height:8.5px;background:#c9c9c9;border-radius:0 1px 0 0;"></div>
<svg style="left:906.9px;top:1045px;" width="24" height="21.8" viewBox="0 0 24 21.800"><path d="M0 2.300A1.800 1.800 0 0 1 1.800 .5H8l2.300 2.700H0z" fill="#e0a11b"/><rect x="0" y="3" width="24" height="18.300" rx="1.600" fill="#ffd54a"/><path d="M0 9h24v10.700a1.600 1.600 0 0 1-1.600 1.600H1.600A1.600 1.600 0 0 1 0 19.700z" fill="#fcc934"/><path d="M4.800 21.300v-5a2 2 0 0 1 2-2h10.400a2 2 0 0 1 2 2v5z" fill="#1272cf"/><rect x="8" y="17" width="8" height="1.800" rx=".9" fill="#0a4f9e"/></svg>
<svg style="left:950.8px;top:1043.8px;" width="24.2" height="24.2" viewBox="0 0 24 24"><defs><linearGradient id="eg1" x1=".2" y1="0" x2=".6" y2="1"><stop offset="0" stop-color="#1f9fe6"/><stop offset="1" stop-color="#0669cc"/></linearGradient><linearGradient id="eg2" x1="0" y1=".3" x2="1" y2=".6"><stop offset="0" stop-color="#35bdf2"/><stop offset=".5" stop-color="#2fc6c0"/><stop offset="1" stop-color="#63dc3e"/></linearGradient></defs><circle cx="12" cy="12" r="11.900" fill="url(#eg1)"/><path d="M7.200 12.600C6.400 18.200 10.500 22.200 15.500 22.400c3 .1 5.600-1.700 7-4.400-2.800 1.700-6.400 1.900-9 .2-2.900-2-3.700-5-3.200-7.800-1.700.3-2.800 1-3.100 2.200z" fill="#0d4f9f"/><path d="M9.400 12.400a2.800 2.800 0 0 1 5.300-1.200c.4 1.600-1.100 2.400-1 3.700.3 1.400 2.300 1.900 4.300 1.800 1.500.3 3.300 0 4.600-.7-1.300 2.100-3.800 3.100-6.200 3-4-.1-7-2.900-7-6.600z" fill="#e9eefb"/><path d="M.3 9.800C1.600 3.800 6.700 0 12.300 0 19.300 0 24 5 24 10.700c0 4-2.500 6.200-6.200 6.200-2.800 0-4.500-.9-4.200-1.800.4-1 1.400-1.700 1.100-3.400C14.200 9 11.500 7.300 8.300 7.300c-4 0-6.800 1.400-8 2.500z" fill="url(#eg2)"/></svg>
<svg style="left:995px;top:1044.7px;" width="24" height="21.4" viewBox="0 0 24 21.400"><defs><linearGradient id="cpa" x1="0" y1="0" x2="0" y2="1"><stop offset="0" stop-color="#1ea7f7"/><stop offset=".3" stop-color="#1893e0"/><stop offset=".65" stop-color="#5cb85c"/><stop offset="1" stop-color="#f2d000"/></linearGradient><linearGradient id="cpb" x1=".6" y1="0" x2=".3" y2="1"><stop offset="0" stop-color="#b455e8"/><stop offset=".5" stop-color="#f0548c"/><stop offset="1" stop-color="#ffb14a"/></linearGradient><linearGradient id="cpc" x1="0" y1="0" x2="1" y2="1"><stop offset="0" stop-color="#1733c9"/><stop offset="1" stop-color="#1a7be6"/></linearGradient><linearGradient id="cpd" x1="0" y1="0" x2="1" y2="1"><stop offset="0" stop-color="#ff8a3a"/><stop offset="1" stop-color="#e8402a"/></linearGradient></defs><path d="M11.600 .3h4c1.400 0 2.200 1 2.600 2.300.4 1.500 1 3 2.500 3.700H14.500l-3.500.2z" fill="url(#cpc)"/><path d="M12.500 21.100h-4c-1.400 0-2-1-2.300-2.300-.3-1.400-.8-2.700-2-3.600h5.300l3.500-.2z" fill="url(#cpd)"/><path d="M7 .3h6.500c-1.200.5-1.800 1.600-2.200 3L8.700 13c-.5 1.500-1.600 2.300-3 2.300H2.300C.7 15.300-.2 14 .3 12.300L3.700 2.800C4.300 1.200 5.500 .3 7 .3z" fill="url(#cpa)"/><path d="M17 21.100h-6.500c1.200-.5 1.800-1.600 2.200-3l2.600-9.500c.5-1.500 1.600-2.300 3-2.300h3.400c1.600 0 2.500 1.300 2 3l-3.400 9.500c-.6 1.600-1.800 2.300-3.300 2.300z" fill="url(#cpb)"/></svg>
<svg style="left:1039px;top:1045px;" width="23.4" height="22.8" viewBox="0 0 23.400 22.800"><path d="M6 5.500V2.600A1.800 1.800 0 0 1 7.800 .8h7.800a1.800 1.800 0 0 1 1.800 1.800V5.500" fill="#f4f8fd" stroke="#2bbcf4" stroke-width="1.600"/><defs><linearGradient id="stg" x1="0" y1="0" x2="1" y2="1"><stop offset="0" stop-color="#1a62b4"/><stop offset="1" stop-color="#1f3e78"/></linearGradient></defs><path d="M1.200 4.600H22.200a1.200 1.200 0 0 1 1.200 1.200v13.700a3.300 3.300 0 0 1-3.300 3.300H3.300A3.300 3.300 0 0 1 0 19.500V5.800a1.200 1.200 0 0 1 1.200-1.200z" fill="url(#stg)"/><rect x="7" y="9" width="4.300" height="4.300" fill="#f25022"/><rect x="12.100" y="9" width="4.300" height="4.300" fill="#7fba00"/><rect x="7" y="14.100" width="4.300" height="4.300" fill="#00a4ef"/><rect x="12.100" y="14.100" width="4.300" height="4.300" fill="#ffb900"/></svg>
<div class="abs" style="left:1075.800px;top:1036.600px;width:38.400px;height:38.600px;border:1px solid #edf1fa;border-radius:5px;background:#f1f4fc;box-shadow:0 .5px 1px rgba(150,160,185,.25)"></div>
<svg style="left:1083px;top:1043.9px;" width="24" height="24" viewBox="0 0 48 48"><path d="M24 12H44.780A24 24 0 0 0 3.220 12L13.610 30z" fill="#e33b2e"/><path d="M13.610 30L3.220 12A24 24 0 0 0 24 48L34.390 30z" fill="#1ea446"/><path d="M34.390 30L24 48A24 24 0 0 0 44.780 12H24z" fill="#fcc934"/><circle cx="24" cy="24" r="11.800" fill="#fff"/><circle cx="24" cy="24" r="9.300" fill="#3b7ff0"/></svg>
<div class="abs" style="left:1088.3px;top:1072px;width:13.6px;height:3px;background:#0f6cd0;border-radius:1.500px;"></div>
<div class="abs" style="left:1126.9px;top:1044px;width:24px;height:24px;background:#fff;border-radius:50%;"></div>
<svg style="left:1131.4px;top:1048.3px;" width="15.4" height="15.4" viewBox="0 0 16 16"><path d="M8 1.200a6.700 6.700 0 0 0-5.800 10.100L1.300 14.700l3.500-.9A6.700 6.700 0 1 0 8 1.200z" fill="none" stroke="#25d366" stroke-width="1.500"/><path d="M5.600 4.600c.2-.4.400-.4.600-.4h.4c.2 0 .4 0 .5.400l.6 1.500c.1.200 0 .4-.1.500l-.4.500c-.1.100-.1.300 0 .4.600 1 1.400 1.700 2.400 2.100.2.100.3 0 .4-.1l.5-.7c.1-.2.300-.2.500-.1l1.400.7c.2.100.3.200.3.400 0 .5-.3 1.100-.8 1.400-.7.300-1.600.3-3-.4-1.900-.8-3.200-2.500-3.600-3.300-.6-1-.5-2 .3-2.900z" fill="#25d366"/></svg>
<div class="abs" style="left:1172.7px;top:1044.5px;width:20.6px;height:20.8px;background:#fff;border-radius:50%;"></div>
<svg style="left:1177.5px;top:1051.8px;" width="11.5" height="6.5" viewBox="0 0 11.500 6.500"><circle cx="3" cy="3.200" r="2.100" fill="none" stroke="#4285f4" stroke-width="1.700"/><path d="M5.600 3.200H7" stroke="#ea4335" stroke-width="1.700"/><path d="M7 3.200H9" stroke="#fbbc04" stroke-width="1.700"/><path d="M9 3.200H11.300M10.300 3.200V5" stroke="#34a853" stroke-width="1.700"/></svg>
<svg style="left:1215px;top:1045.1px;" width="24" height="21.3" viewBox="0 0 24 21.300"><rect x="6" y="0" width="18" height="21.300" rx="1.300" fill="#21a366"/><rect x="15.500" y="0" width="8.500" height="5.400" fill="#33c481"/><rect x="6" y="5.300" width="9.500" height="5.400" fill="#107c41"/><rect x="15.500" y="5.300" width="8.500" height="5.400" fill="#21a366"/><rect x="6" y="10.600" width="18" height="5.400" fill="#107c41"/><path d="M6 16h18v4a1.300 1.300 0 0 1-1.300 1.300H7.300A1.300 1.300 0 0 1 6 20z" fill="#185c37"/><rect x="0" y="4.900" width="12.300" height="11.800" rx=".6" fill="#107c41"/><path d="M3.300 7L9 14.600M9 7L3.300 14.600" stroke="#fff" stroke-width="1.700"/></svg>
<div class="abs" style="left:1259px;top:1043.9px;width:24.1px;height:24px;background:#fe3c30;"></div>
<svg style="left:1263.4px;top:1050.2px;" width="16" height="11.4" viewBox="0 0 16 11.400"><path d="M5.700 0L11.400 5.700 5.700 11.400 0 5.700z" fill="#fff"/><path d="M10.300 .8L15.200 5.700 10.300 10.600" fill="none" stroke="#fff" stroke-width="1.700"/></svg>
<div class="abs" style="left:916.2px;top:1072.3px;width:6px;height:2.4px;background:#8a8d93;border-radius:1.200px;"></div>
<div class="abs" style="left:960px;top:1072.3px;width:6px;height:2.4px;background:#8a8d93;border-radius:1.200px;"></div>
<div class="abs" style="left:1223.5px;top:1072.3px;width:6px;height:2.4px;background:#8a8d93;border-radius:1.200px;"></div>
<div class="abs" style="left:1267.8px;top:1072.3px;width:6px;height:2.4px;background:#8a8d93;border-radius:1.200px;"></div>
<div class="abs" style="left:1303.3px;top:1066.4px;width:17.4px;height:13.6px;background:#f1f3f6;border-radius:2.500px 2.500px 0 0;"></div>
<div class="abs" style="left:1305.1px;top:1068px;width:2.9px;height:3px;background:#e03a0c;border-radius:2px 0 0 0;"></div>
<div class="abs" style="left:1309.1px;top:1068px;width:2.9px;height:3px;background:#e03a0c;border-radius:0;"></div>
<div class="abs" style="left:1313.1px;top:1068px;width:2.9px;height:3px;background:#e03a0c;border-radius:0 2px 0 0;"></div>
<div class="abs" style="left:1305.1px;top:1072px;width:2.9px;height:3px;background:#e03a0c;border-radius:0;"></div>
<div class="abs" style="left:1305.1px;top:1076px;width:2.9px;height:3px;background:#e03a0c;border-radius:0 0 0 2px;"></div>
<div class="abs" style="left:1309px;top:1075px;width:7px;height:5px;background:#e9ecef;"></div>
<div class="abs" style="left:1310px;top:1071.9px;width:9.7px;height:2.9px;background:linear-gradient(90deg,#8b8f94 0%,#8b8f94 60%,#565a60 62%,#565a60 100%);border-radius:1.400px;"></div>
<div class="abs" style="left:1315.9px;top:1074.5px;width:3.1px;height:5.5px;background:#8e9398;"></div>
<div class="abs" style="left:1308.5px;top:1079px;width:12px;height:1px;background:#b4bac2;"></div>
<svg style="left:1321px;top:1076.8px;" width="6.4" height="6.4" viewBox="0 0 6.400 6.400"><circle cx="3.200" cy="3.200" r="2.500" fill="#fff" stroke="#22a3ee" stroke-width="1.400"/></svg>
<svg style="left:1735px;top:1052.7px;" width="11" height="6.5" viewBox="0 0 11 6.500"><path d="M.7 5.900L5.500 1.100L10.300 5.900" fill="none" stroke="#1f1f1f" stroke-width="1.400"/></svg>
<svg style="left:1764px;top:1049.3px;" width="16.5" height="13.5" viewBox="0 0 16.500 13.500"><path d="M4 12.200a3.300 3.300 0 0 1-.6-6.500A4.600 4.600 0 0 1 12 4.600a3.700 3.700 0 0 1 .7 7.300c-.2.200-.6.300-.9.300z" fill="#8f959e" stroke="#1f1f1f" stroke-width="1.200"/><path d="M1.500 1.300L15.500 12.300" stroke="#1f1f1f" stroke-width="1.500"/></svg>
<svg style="left:1796px;top:1047.3px;" width="16.5" height="17" viewBox="0 0 16.500 17"><rect x=".6" y="2.600" width="12" height="9" rx=".8" fill="none" stroke="#1f1f1f" stroke-width="1.200"/><path d="M6.600 11.600V15M3 15.600H10.500" stroke="#1f1f1f" stroke-width="1.200"/><rect x="11.600" y=".6" width="4" height="6.400" rx="1" fill="#e5ebf8" stroke="#1f1f1f" stroke-width="1.100"/><path d="M13.600 7V10H12" fill="none" stroke="#1f1f1f" stroke-width="1"/></svg>
<svg style="left:1820px;top:1050px;" width="16.5" height="12.5" viewBox="0 0 16.500 12.500"><path d="M.6 4.300H3.300L6.600 1V11.500L3.300 8.200H.6z" fill="none" stroke="#1f1f1f" stroke-width="1.100" stroke-linejoin="round"/><path d="M9 4a3.300 3.300 0 0 1 0 4.500M11.300 2.300a5.600 5.600 0 0 1 0 7.900M13.600 .7a8 8 0 0 1 0 11.100" fill="none" stroke="#1f1f1f" stroke-width="1.100"/></svg>
<span class="t" style="left:1857.90px;top:1042px;height:12px;line-height:12px;font-size:10.7px;color:#1b1b1b;transform:scaleX(1.0615);">4:32 PM</span>
<span class="t" style="left:1852.50px;top:1058px;height:12px;line-height:12px;font-size:10.7px;color:#1b1b1b;transform:scaleX(1.1500);">9/2/2025</span>
<!-- browser chrome -->
<div class="abs" style="left:0px;top:0px;width:1920px;height:40px;background:#d3e3fd;"></div>
<div class="abs" style="left:6px;top:6px;width:28px;height:28px;background:#e5edfc;border-radius:9px;"></div>
<svg style="left:15px;top:17px;" width="10" height="6" viewBox="0 0 10 6"><path d="M1 1 L5 5 L9 1" fill="none" stroke="#1f1f1f" stroke-width="1.8"/></svg>
<div class="abs" style="left:0px;top:40px;width:1920px;height:46px;background:#fff;border-radius:9px 9px 0 0;"></div>
<div class="abs" style="left:278px;top:6px;width:232px;height:35px;background:#fff;border-radius:9px 9px 0 0;"></div>
<div class="abs" style="left:269px;top:31px;width:9px;height:9px;background:radial-gradient(circle at 0 0,rgba(255,255,255,0) 8.6px,#fff 9.2px);"></div>
<div class="abs" style="left:510px;top:31px;width:9px;height:9px;background:radial-gradient(circle at 100% 0,rgba(255,255,255,0) 8.6px,#fff 9.2px);"></div>
<div class="abs" style="left:0px;top:86px;width:1920px;height:1px;background:#e2e3e6;"></div>
<svg style="left:48px;top:12px;" width="16" height="16" viewBox="0 0 16 16"><path d="M8 .9a7.100 7.100 0 0 0-6.100 10.700L.9 15.100l3.600-.9A7.100 7.100 0 1 0 8 .9z" fill="#1fc148" stroke="#fff" stroke-width=".9"/><path d="M5.4 4.3c.2-.4.4-.4.6-.4h.5c.2 0 .4 0 .5.4l.7 1.600c.1.2 0 .4-.1.500l-.5.600c-.1.100-.1.300 0 .400.700 1.100 1.500 1.800 2.600 2.300.200.100.300 0 .400-.100l.600-.800c.100-.200.300-.200.500-.100l1.500.700c.200.100.300.200.300.400 0 .600-.300 1.200-.900 1.500-.700.300-1.700.300-3.300-.400-2-.900-3.400-2.700-3.900-3.600-.600-1-.500-2.200.500-3z" fill="#fff"/></svg>
<span class="t" style="left:72.00px;top:14px;height:14px;line-height:14px;font-size:12px;color:#2e2e2e;transform:scaleX(0.9935);">WhatsApp</span>
<svg style="left:251.5px;top:15.5px;" width="9" height="9" viewBox="0 0 9 9"><path d="M.8 .8 L8.2 8.2 M8.2 .8 L.8 8.2" stroke="#3c4043" stroke-width="1.6" fill="none"/></svg>
<svg style="left:286.7px;top:12px;" width="15.3" height="16" viewBox="0 0 16 16"><rect x="-.7" y="-.2" width="16.700" height="16.400" fill="#fff"/><rect x="0" y=".2" width="12.500" height="1.700" fill="#2395dc" opacity=".55"/><rect x=".3" y="14.300" width="12.500" height="1.700" fill="#2395dc" opacity=".7"/><path d="M0 2.500H11.500C15 2.500 15.600 6.300 13.300 7.900C16.700 8.800 16.500 13.700 12.300 13.700H0z" fill="#1f92dc"/><ellipse cx="6.700" cy="8.200" rx="5.300" ry="4.100" fill="#fff"/><path d="M6.200 5v6.800M3.300 8.600l5-2.300" stroke="#2395dc" stroke-width="1.300" fill="none"/><circle cx="8.800" cy="8.600" r="1.800" fill="#cfe6f7"/></svg>
<span class="t" style="left:310.00px;top:14px;height:14px;line-height:14px;font-size:12px;color:#1f1f1f;transform:scaleX(0.9146);">BESCOM-TRM</span>
<svg style="left:489.5px;top:15.5px;" width="9" height="9" viewBox="0 0 9 9"><path d="M.8 .8 L8.2 8.2 M8.2 .8 L.8 8.2" stroke="#1f1f1f" stroke-width="1.700" fill="none"/></svg>
<svg style="left:524.7px;top:12px;" width="15.3" height="16" viewBox="0 0 16 16"><rect x="-.7" y="-.2" width="16.700" height="16.400" fill="#fff"/><rect x="0" y=".2" width="12.500" height="1.700" fill="#2395dc" opacity=".55"/><rect x=".3" y="14.300" width="12.500" height="1.700" fill="#2395dc" opacity=".7"/><path d="M0 2.500H11.500C15 2.500 15.600 6.300 13.300 7.900C16.700 8.800 16.500 13.700 12.300 13.700H0z" fill="#1f92dc"/><ellipse cx="6.700" cy="8.200" rx="5.300" ry="4.100" fill="#fff"/><path d="M6.200 5v6.800M3.300 8.600l5-2.300" stroke="#2395dc" stroke-width="1.300" fill="none"/><circle cx="8.800" cy="8.600" r="1.800" fill="#cfe6f7"/></svg>
<span class="t" style="left:548.00px;top:14px;height:14px;line-height:14px;font-size:12px;color:#2e2e2e;transform:scaleX(0.9146);">BESCOM-TRM</span>
<svg style="left:727.5px;top:15.5px;" width="9" height="9" viewBox="0 0 9 9"><path d="M.8 .8 L8.2 8.2 M8.2 .8 L.8 8.2" stroke="#3c4043" stroke-width="1.600" fill="none"/></svg>
<div class="abs" style="left:750px;top:12px;width:1.8px;height:16px;background:#a9c5f4;"></div>
<svg style="left:762px;top:12px;" width="16" height="16" viewBox="0 0 16 16"><path d="M1.300 1h3.200v13.500H1.300z" fill="#4f9ad8"/><path d="M5 1h6.500l3 3v11H5z" fill="#fbfbfb" stroke="#b9bcc0" stroke-width=".8"/><path d="M8.500 8.500h6.200v6.700H8.500z" fill="#f4f4f4" stroke="#c4c7cb" stroke-width=".7"/><path d="M9.800 10.800h3.600M9.800 12.800h3.600" stroke="#cfd2d6" stroke-width=".9"/></svg>
<span class="t" style="left:786.00px;top:14px;height:14px;line-height:14px;font-size:12px;color:#2e2e2e;width:166px;overflow:hidden;transform:scaleX(0.99);-webkit-mask-image:linear-gradient(90deg,#000 88%,transparent 100%);">bescom.trm.ieasybill.com/Repo</span>
<svg style="left:964.5px;top:15.5px;" width="9" height="9" viewBox="0 0 9 9"><path d="M.8 .8 L8.2 8.2 M8.2 .8 L.8 8.2" stroke="#3c4043" stroke-width="1.600" fill="none"/></svg>
<div class="abs" style="left:988px;top:12px;width:1.8px;height:16px;background:#a9c5f4;"></div>
<svg style="left:1000.5px;top:14.5px;" width="11" height="11" viewBox="0 0 11 11"><path d="M5.500 .3V10.700M.3 5.500H10.700" stroke="#3c4043" stroke-width="1.700" fill="none"/></svg>
<div class="abs" style="left:1800px;top:20px;width:10.5px;height:1px;background:#111;"></div>
<svg style="left:1846px;top:15px;" width="10" height="10" viewBox="0 0 10 10"><rect x=".5" y="2.500" width="7" height="7" rx="1.300" fill="none" stroke="#111" stroke-width="1"/><path d="M2.800 2.300V1.800a1.300 1.300 0 0 1 1.300-1.300h4.100a1.300 1.300 0 0 1 1.300 1.300v4.100a1.300 1.300 0 0 1-1.300 1.300h-.5" fill="none" stroke="#111" stroke-width="1"/></svg>
<svg style="left:1892px;top:15px;" width="10" height="10" viewBox="0 0 10 10"><path d="M.3 .3 L9.700 9.700 M9.700 .3 L.3 9.700" stroke="#111" stroke-width="1.100" fill="none"/></svg>
<svg style="left:16px;top:57px;" width="12" height="12" viewBox="0 0 12 12"><path d="M6.300 .8 L1.100 6 L6.300 11.200 M1.100 6 H11.600" fill="none" stroke="#474747" stroke-width="1.500"/></svg>
<svg style="left:52px;top:57px;" width="12" height="12" viewBox="0 0 12 12"><path d="M5.700 .8 L10.900 6 L5.700 11.200 M10.900 6 H.4" fill="none" stroke="#b4b4b4" stroke-width="1.500"/></svg>
<svg style="left:87.5px;top:56.5px;" width="13" height="13" viewBox="0 0 13 13"><path d="M11.300 6.500a4.800 4.800 0 1 1-1.500-3.500" fill="none" stroke="#474747" stroke-width="1.500"/><path d="M11.700 .9V4.600H8" fill="none" stroke="#474747" stroke-width="1.500"/></svg>
<div class="abs" style="left:120px;top:46px;width:1679.5px;height:34px;background:#edf2fa;border-radius:17px;"></div>
<div class="abs" style="left:125px;top:51px;width:24px;height:24px;background:#fff;border-radius:12px;"></div>
<svg style="left:131px;top:57px;" width="12" height="12" viewBox="0 0 12 12"><circle cx="2.800" cy="2.700" r="1.800" fill="none" stroke="#3c3c3c" stroke-width="1.500"/><path d="M6.300 2.700H11.600" stroke="#3c3c3c" stroke-width="1.600"/><circle cx="9.200" cy="9.300" r="1.800" fill="none" stroke="#3c3c3c" stroke-width="1.500"/><path d="M.4 9.300H5.700" stroke="#3c3c3c" stroke-width="1.600"/></svg>
<span class="t" style="left:157.00px;top:55px;height:16px;line-height:16px;font-size:14px;color:#1f1f1f;transform:scaleX(1.0025);">bescom.trm.ieasybill.com<span style="color:#474747">/DepositCorrection/DepositCorrection</span></span>
<svg style="left:1736px;top:56px;" width="14" height="14" viewBox="0 0 14 14"><circle cx="5.600" cy="5.600" r="4.300" fill="none" stroke="#474747" stroke-width="1.500"/><path d="M8.800 8.800L13.200 13.200" stroke="#474747" stroke-width="1.700"/><path d="M5.600 3.500V7.700M3.500 5.600H7.700" stroke="#474747" stroke-width="1.200"/></svg>
<svg style="left:1768px;top:55px;" width="16" height="16" viewBox="0 0 16 16"><path d="M8 1.300L10 5.800 14.900 6.300 11.200 9.600 12.300 14.400 8 11.900 3.700 14.400 4.800 9.600 1.100 6.300 6 5.800z" fill="none" stroke="#474747" stroke-width="1.400" stroke-linejoin="round"/></svg>
<svg style="left:1818px;top:55px;" width="16" height="16" viewBox="0 0 16 16"><path d="M8 1V10.500M4 6.800L8 10.800 12 6.800" fill="none" stroke="#1f1f1f" stroke-width="1.700"/><path d="M1.200 11.500V14.700H14.800V11.500" fill="none" stroke="#1f1f1f" stroke-width="1.700"/></svg>
<div class="abs" style="left:1852.5px;top:52.5px;width:21px;height:21px;background:#f8f9fc;border-radius:11px;"></div>
<svg style="left:1856.900px;top:55.100px" width="12.200" height="16.100" viewBox="0 0 16 16" preserveAspectRatio="none"><rect x="0" y=".1" width="12" height="1.400" fill="#2395dc" opacity=".6"/><rect x="0" y="14.400" width="12.500" height="1.500" fill="#2395dc" opacity=".75"/><path d="M0 2.600H11.300C15 2.600 15.600 6.400 13.300 8C16.700 8.900 16.500 13.700 12.300 13.700H0z" fill="#1f8fdc"/><ellipse cx="6.800" cy="8.200" rx="5.200" ry="3.800" fill="#fff"/><path d="M6.200 5v6.800M3.300 8.300l5-2.600" stroke="#2395dc" stroke-width="1.500" fill="none"/></svg>
<div class="abs" style="left:1896.3px;top:55.9px;width:3.2px;height:3.2px;background:#3a3a3a;border-radius:2px;"></div>
<div class="abs" style="left:1896.3px;top:61.4px;width:3.2px;height:3.2px;background:#3a3a3a;border-radius:2px;"></div>
<div class="abs" style="left:1896.3px;top:66.9px;width:3.2px;height:3.2px;background:#3a3a3a;border-radius:2px;"></div>
</body>
</html>
